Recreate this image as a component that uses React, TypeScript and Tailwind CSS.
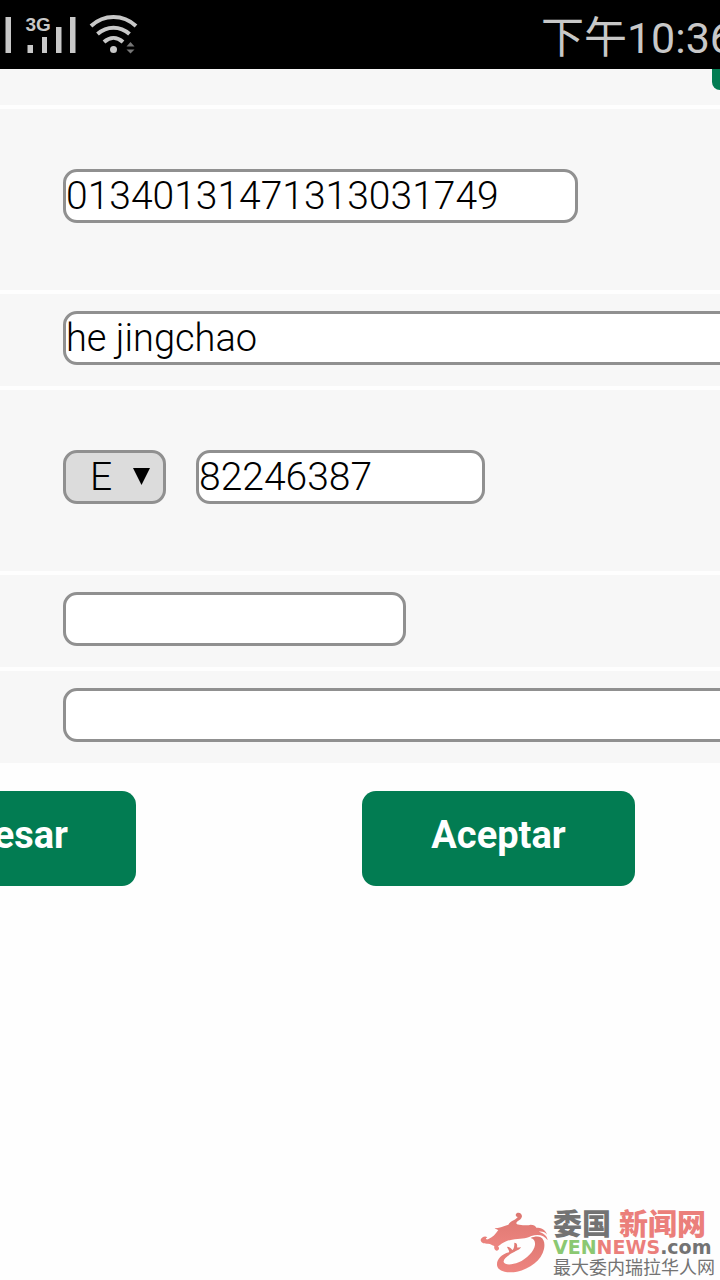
import { useState } from "react";
import type { InputHTMLAttributes, ReactNode } from "react";
import clsx from "clsx";

function Row({ tall, children }: { tall?: boolean; children: ReactNode }) {
  return (
    <div className={clsx("flex overflow-hidden bg-[#f7f7f7] pl-[63px]", tall ? "h-[181px] pt-[60px]" : "h-[92px] pt-[17px]")}>
      {children}
    </div>
  );
}

function TextBox({ className, ...props }: InputHTMLAttributes<HTMLInputElement>) {
  return (
    <input
      type="text"
      className={clsx(
        "h-[54px] shrink-0 rounded-[14px] border-3 border-[#909090] bg-white font-light text-black outline-none",
        className
      )}
      {...props}
    />
  );
}

function StatusBar() {
  return (
    <header className="flex h-[69px] items-start justify-between overflow-hidden bg-black text-[#c8c8c8]">
      <svg className="h-[69px] w-[160px] shrink-0" viewBox="0 0 160 69" fill="currentColor" aria-hidden="true">
        <rect x="5.500" y="17" width="5.500" height="36" />
        <text x="25.500" y="31" fontSize="19" fontWeight="700" fontFamily="Liberation Sans, sans-serif">3G</text>
        <rect x="27.500" y="45" width="5.500" height="8" />
        <rect x="42" y="37" width="5" height="16" />
        <rect x="56" y="27" width="5.500" height="26" />
        <rect x="70" y="17" width="5.500" height="36" />
        <g fill="none" stroke="currentColor" strokeWidth="4">
          <path d="M91 26C104 14 123 14 136 26" />
          <path d="M97.500 34C107 25.500 120 25.500 129.500 34" />
          <path d="M104 42C110 36.500 117 36.500 123 42" />
        </g>
        <circle cx="113.500" cy="49.500" r="3.500" />
        <path d="M126.500 46.500l4-4.500 4 4.500zM126.500 49.500h8l-4 4z" fill="#777" />
      </svg>
      {/* the clock runs past the right edge */}
      <time className="-mr-[14px] whitespace-nowrap pt-[6px] text-[43px] leading-[64px]">下午10:36</time>
    </header>
  );
}

function Watermark() {
  return (
    <footer className="mt-auto flex items-end justify-end gap-1 pr-[5px] pb-[5px]">
      <svg className="h-[64px] w-[70px] shrink-0" viewBox="25 18 210 192" aria-hidden="true">
        <defs>
          <linearGradient id="dragon" x1="0" y1="0" x2="0" y2="1">
            <stop offset="0" stopColor="#dd7771" />
            <stop offset="1" stopColor="#ee8580" />
          </linearGradient>
        </defs>
        <g fill="url(#dragon)">
          <path d="M50 97C44 91 32 96 30 104C29 113 40 117 52 116C60 116 65 121 71 123C69 131 73 138 79 137C86 135 87 128 82 124C94 116 103 107 124 104C148 100 164 103 182 93C204 86 220 91 231 106C230 94 221 85 205 80C216 79 224 82 229 89C225 73 211 68 197 68C195 62 188 59 180 59C170 63 157 60 146 59C137 59 135 54 139 50C146 46 153 42 154 34C154 26 146 21 139 24C133 28 134 34 141 36C139 43 120 47 113 59C97 65 84 69 72 70C76 73 80 74 83 75C75 87 66 97 52 103C46 104 43 101 50 97Z" />
          <path
            fillRule="evenodd"
            d="M180 99C189 95 203 93 210 97C221 103 223 117 220 132C213 166 177 192 139 200C109 206 80 198 79 180C78 163 92 148 115 142C117 133 107 129 110 125C116 125 122 131 125 135C131 131 131 120 131 113C138 113 141 119 139 127C143 129 148 125 151 127C148 134 137 137 129 142C113 150 97 162 99 171C102 181 124 180 144 172C168 162 190 139 193 120C194 108 190 101 180 99Z"
          />
        </g>
      </svg>
      <div className="text-[#737373]">
        <p className="flex gap-2 font-['Noto_Sans_CJK_SC',sans-serif] text-[29px] leading-[28px] font-black">
          <span>委国</span>
          <span className="text-[#eb7f7b]">新闻网</span>
        </p>
        <p className="font-['DejaVu_Sans',sans-serif] text-[19px] leading-[22px] font-bold">
          <span className="text-[#8bc872]">VEN</span>
          <span className="text-[#eb7f7b]">NEWS</span>.com
        </p>
        <p className="font-['Noto_Sans_CJK_SC',sans-serif] text-[18px] leading-[17px]">最大委内瑞拉华人网</p>
      </div>
    </footer>
  );
}

export default function App() {
  const [account, setAccount] = useState("01340131471313031749");
  const [name, setName] = useState("he jingchao");
  const [idType, setIdType] = useState("E");
  const [idNumber, setIdNumber] = useState("82246387");

  return (
    <div className="flex min-h-screen flex-col overflow-x-hidden bg-[#fefefe] font-['Roboto','Noto_Sans_CJK_SC',sans-serif]">
      <StatusBar />

      <form className="flex flex-col" onSubmit={(e) => e.preventDefault()}>
        <div className="flex flex-col gap-1">
          <div className="flex h-[36px] items-start justify-end bg-[#f7f7f7]">
            <button type="button" aria-label="Buscar" className="h-[21px] w-2 rounded-bl-2xl bg-[#027c52]" />
          </div>

          <Row tall>
            <TextBox aria-label="Cuenta" className="w-[515px] text-[39px]" value={account} onChange={(e) => setAccount(e.target.value)} />
          </Row>

          <Row>
            <TextBox aria-label="Nombre" className="w-[110%] text-[38px]" value={name} onChange={(e) => setName(e.target.value)} />
          </Row>

          <Row tall>
            <div className="relative mr-[30px] h-[54px] w-[103px] shrink-0">
              <select
                aria-label="Tipo de documento"
                className="h-full w-full appearance-none rounded-[14px] border-3 border-[#909090] bg-[#dcdcdc] pl-6 text-[39px] leading-[46px] font-light text-black outline-none"
                value={idType}
                onChange={(e) => setIdType(e.target.value)}
              >
                <option>E</option>
                <option>V</option>
                <option>J</option>
              </select>
              <svg className="pointer-events-none absolute top-[18px] right-4 h-[17px] w-[17px]" viewBox="0 0 17 17" aria-hidden="true">
                <path d="M0 0h17L8.500 17z" />
              </svg>
            </div>
            <TextBox aria-label="Documento" className="w-[289px] text-[39px]" value={idNumber} onChange={(e) => setIdNumber(e.target.value)} />
          </Row>

          <Row>
            <TextBox aria-label="Monto" className="w-[343px] text-[39px]" />
          </Row>

          <Row>
            <TextBox aria-label="Correo" className="w-[110%] text-[38px]" />
          </Row>
        </div>

        <div className="-ml-40 flex gap-[226px] pt-7">
          <button type="button" className="h-[95px] w-[296px] shrink-0 rounded-[14px] bg-[#027c52] pr-[68px] pb-[6px] text-right text-[38px] font-bold text-white">
            Regresar
          </button>
          <button type="submit" className="h-[95px] w-[273px] shrink-0 rounded-[14px] bg-[#027c52] pb-[6px] text-[38px] font-bold text-white">
            Aceptar
          </button>
        </div>
      </form>

      <Watermark />
    </div>
  );
}
